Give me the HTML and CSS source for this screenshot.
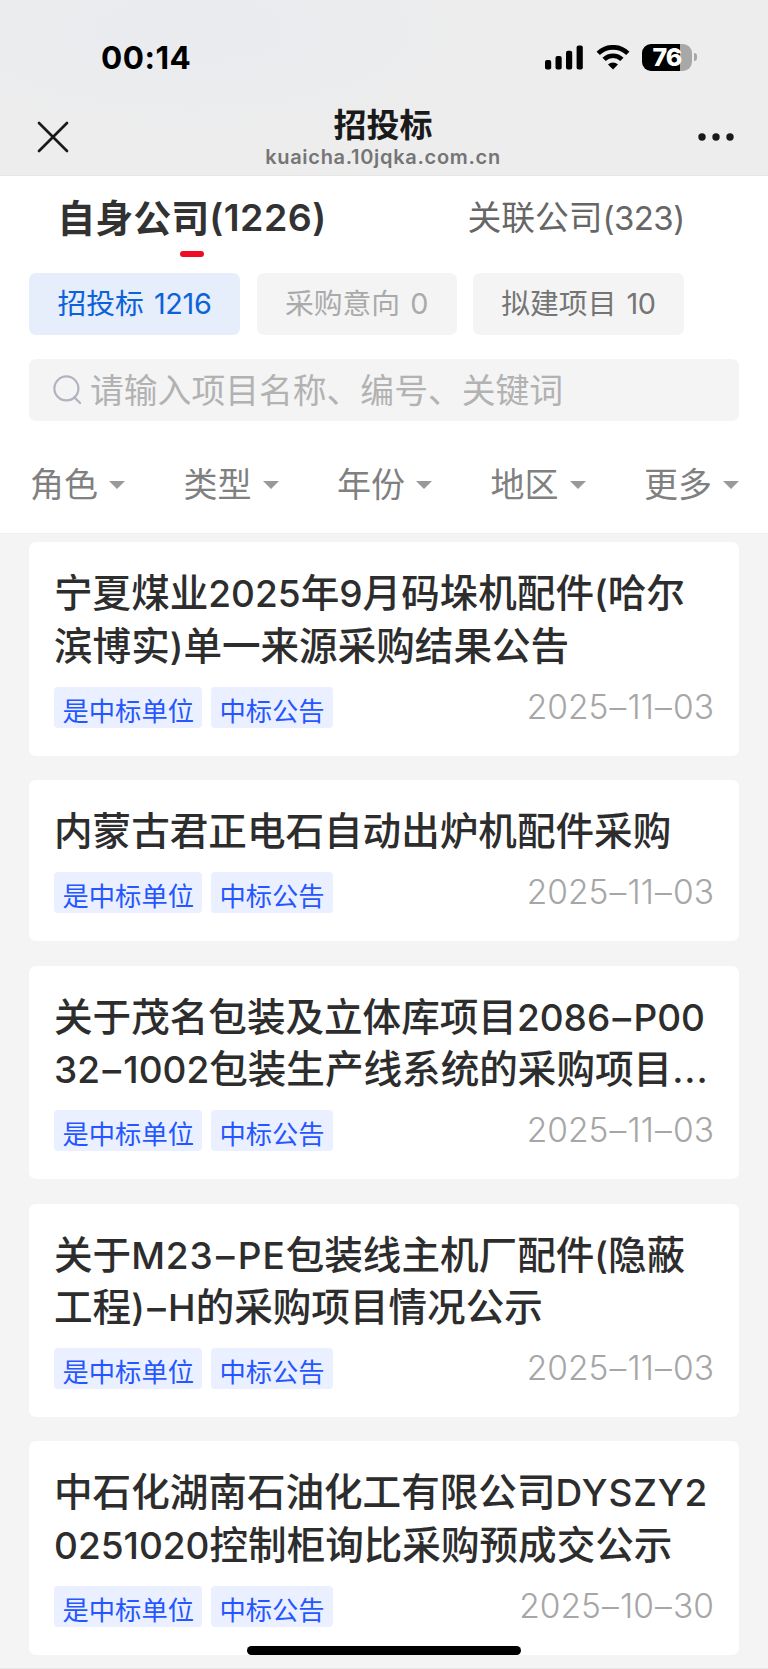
FILE: index.html
```html
<!DOCTYPE html>
<html lang="zh-CN">
<head>
  <meta charset="UTF-8" />
  <meta name="viewport" content="width=device-width, initial-scale=1.0" />
  <title>招投标</title>
  <link rel="stylesheet" href="styles.css">
</head>
<body>
  <header class="top">
    <div class="status-bar">
      <span class="time">00:14</span>
      <div class="status-icons">
        <svg class="signal" width="38" height="25" viewBox="0 0 38 25">
          <rect x="0" y="15" width="6.2" height="9.4" rx="2" />
          <rect x="10.5" y="11" width="6.2" height="13.4" rx="2" />
          <rect x="21" y="5.8" width="6.2" height="18.6" rx="2" />
          <rect x="31.6" y="0.4" width="6.2" height="24" rx="2" />
        </svg>
        <svg class="wifi" width="34" height="25" viewBox="0 0 34 25">
          <path d="M2.2 8.4a21 21 0 0 1 29.6 0M8.1 14.4a12.7 12.7 0 0 1 17.8 0" fill="none" stroke="#000" stroke-width="4.7" />
          <path d="M17 24.6l-5-5a7.2 7.2 0 0 1 10 0z" />
        </svg>
        <div class="battery">
          <div class="battery-body"><span>76</span></div>
          <div class="battery-cap"></div>
        </div>
      </div>
    </div>
    <div class="nav-bar">
      <svg class="close" width="32" height="32" viewBox="0 0 32 32">
        <path d="M2 2l28 28M30 2L2 30" fill="none" stroke="#1a1a1a" stroke-width="2.7" stroke-linecap="round" />
      </svg>
      <div class="nav-title">
        <h1>招投标</h1>
        <p>kuaicha.10jqka.com.cn</p>
      </div>
      <svg class="more" width="36" height="8" viewBox="0 0 36 8">
        <circle cx="4" cy="4" r="3.7" />
        <circle cx="18" cy="4" r="3.7" />
        <circle cx="32" cy="4" r="3.7" />
      </svg>
    </div>
  </header>

  <section class="panel">
    <div class="tabs">
      <div class="tab active">自身公司<span class="num">(1226)</span></div>
      <div class="tab">关联公司<span class="num">(323)</span></div>
    </div>

    <div class="chips">
      <div class="chip chip-wide active">招投标<span class="num">1216</span></div>
      <div class="chip disabled">采购意向<span class="num">0</span></div>
      <div class="chip chip-wide">拟建项目<span class="num">10</span></div>
    </div>

    <div class="search">
      <svg width="30" height="30" viewBox="0 0 30 30">
        <circle cx="13.4" cy="13.4" r="12" />
        <path d="M21.3 22.4l5.8 5.6" />
      </svg>
      <span>请输入项目名称、编号、关键词</span>
    </div>

    <div class="filters">
      <div class="filter">角色<i class="caret"></i></div>
      <div class="filter">类型<i class="caret"></i></div>
      <div class="filter">年份<i class="caret"></i></div>
      <div class="filter">地区<i class="caret"></i></div>
      <div class="filter">更多<i class="caret"></i></div>
    </div>
  </section>

  <main class="list">
    <article class="card">
      <h2>宁夏煤业<span class="num">2025</span>年<span class="num">9</span>月码垛机配件<span class="num">(</span>哈尔<br>滨博实<span class="num">)</span>单一来源采购结果公告</h2>
      <div class="meta">
        <span class="tag">是中标单位</span>
        <span class="tag">中标公告</span>
        <time>2025<span class="dash">–</span>11<span class="dash">–</span>03</time>
      </div>
    </article>

    <article class="card">
      <h2>内蒙古君正电石自动出炉机配件采购</h2>
      <div class="meta">
        <span class="tag">是中标单位</span>
        <span class="tag">中标公告</span>
        <time>2025<span class="dash">–</span>11<span class="dash">–</span>03</time>
      </div>
    </article>

    <article class="card">
      <h2>关于茂名包装及立体库项目<span class="num">2086<span class="dash">–</span>P00</span><br><span class="num">32<span class="dash">–</span>1002</span>包装生产线系统的采购项目<span class="num wide">...</span></h2>
      <div class="meta">
        <span class="tag">是中标单位</span>
        <span class="tag">中标公告</span>
        <time>2025<span class="dash">–</span>11<span class="dash">–</span>03</time>
      </div>
    </article>

    <article class="card">
      <h2>关于<span class="num wide">M23<span class="dash">–</span>PE</span>包装线主机厂配件<span class="num">(</span>隐蔽<br>工程<span class="num">)<span class="dash">–</span>H</span>的采购项目情况公示</h2>
      <div class="meta">
        <span class="tag">是中标单位</span>
        <span class="tag">中标公告</span>
        <time>2025<span class="dash">–</span>11<span class="dash">–</span>03</time>
      </div>
    </article>

    <article class="card">
      <h2>中石化湖南石油化工有限公司<span class="num wide">DYSZY2</span><br><span class="num">0251020</span>控制柜询比采购预成交公示</h2>
      <div class="meta">
        <span class="tag">是中标单位</span>
        <span class="tag">中标公告</span>
        <time>2025<span class="dash">–</span>10<span class="dash">–</span>30</time>
      </div>
    </article>
  </main>

  <div class="home-indicator"></div>
</body>
</html>
```
FILE: styles.css
```css
* {
  margin: 0;
  padding: 0;
  box-sizing: border-box;
}

body {
  font-family: Inter, 'Noto Sans CJK SC', sans-serif;
  color: #2d2d2d;
  background: #f4f4f4;
  height: 1669px;
  overflow: hidden;
  white-space: nowrap;
  border-bottom: 1px solid #e8e8e8;
}

/* status bar + webview nav */
.top {
  height: 176px;
  background: radial-gradient(ellipse 330px 120px at 190px 30px, #eaebef 0%, #ebecee 50%, #ededed 100%);
  border-bottom: 1px solid #e6e6e6;
}

.status-bar {
  height: 99px;
  padding: 15px 71px 0 101px;
  display: flex;
  align-items: center;
  justify-content: space-between;
}

.time {
  font-size: 31.5px;
  font-weight: 700;
  letter-spacing: 0.5px;
  color: #000;
}

.status-icons {
  display: flex;
  align-items: center;
}

.wifi {
  margin: 0 12px 0 13px;
}

.battery {
  display: flex;
  align-items: center;
  gap: 2px;
}

.battery-body {
  width: 50px;
  height: 27px;
  border-radius: 9px;
  background: linear-gradient(90deg, #000 38px, #a8a8a8 38px);
  color: #fff;
  font-size: 25px;
  font-weight: 800;
  line-height: 27px;
  letter-spacing: -1px;
  text-align: center;
}

.battery-cap {
  width: 3px;
  height: 8px;
  border-radius: 0 4px 4px 0;
  background: #a8a8a8;
}

.nav-bar {
  height: 75px;
  padding: 0 34px 0 37px;
  display: grid;
  grid-template-columns: 60px 1fr 60px;
  align-items: center;
}

.nav-title {
  text-align: center;
  padding-right: 5px;
}

.nav-title h1 {
  font-size: 33px;
  line-height: 40px;
  font-weight: 700;
  color: #1a1a1a;
}

.nav-title p {
  font-size: 20px;
  line-height: 24px;
  font-weight: 600;
  letter-spacing: 0.7px;
  color: #757575;
}

.more {
  justify-self: end;
  fill: #1a1a1a;
}

/* tabs, chips, search, filters */
.panel {
  height: 358px;
  background: #fff;
  border-bottom: 1px solid #eee;
  padding: 0 29px;
}

.tabs {
  display: flex;
  height: 97px;
  margin: 0 -29px;
}

.tab {
  flex: 1;
  display: flex;
  justify-content: center;
  font-size: 33.8px;
  line-height: 84px;
  color: #666;
  position: relative;
}

.tab .num {
  font-size: 33px;
  letter-spacing: -0.6px;
}

.tab.active {
  font-size: 38px;
  font-weight: 600;
  color: #323233;
}

.tab.active .num {
  font-size: 37.5px;
  letter-spacing: 0.5px;
}

.tab.active::after {
  content: '';
  position: absolute;
  left: 50%;
  top: 75px;
  width: 24px;
  height: 6px;
  margin-left: -12px;
  border-radius: 3px;
  background: #f10c26;
}

.chips {
  display: flex;
  gap: 16.5px;
}

.chip {
  width: 200px;
  height: 62px;
  border-radius: 7px;
  background: #f4f4f4;
  color: #757575;
  font-size: 28.8px;
  line-height: 62px;
  display: flex;
  justify-content: center;
  gap: 10px;
}

.chip .num {
  letter-spacing: -0.3px;
}

.chip-wide {
  width: 211px;
}

.chip.active {
  background: #e6edfb;
  color: #0b62d9;
}

.chip.disabled {
  color: #aaa;
}

.search {
  height: 62px;
  margin-top: 24px;
  padding-left: 24px;
  border-radius: 7px;
  background: #f4f4f4;
  color: #b2b2b2;
  display: flex;
  align-items: center;
  gap: 7px;
  font-size: 33.8px;
}

.search span {
  padding-bottom: 4px;
}

.search svg {
  fill: none;
  stroke: #b1b4c0;
  stroke-width: 2.2;
  stroke-linecap: round;
}

.filters {
  display: flex;
  justify-content: space-between;
  margin-top: 34px;
  padding-left: 1px;
}

.filter {
  display: flex;
  align-items: center;
  gap: 11px;
  font-size: 34px;
  line-height: 60px;
  color: #808080;
}

.caret {
  border: 8px solid transparent;
  border-top-color: #999;
  border-bottom: 0;
}

/* list */
.list {
  padding: 8.4px 29px 0;
  display: flex;
  flex-direction: column;
  gap: 24.6px;
}

.card {
  background: #fff;
  border-radius: 7px;
  padding: 25px 25px 28px;
}

.card h2 {
  font-size: 38.6px;
  line-height: 52.5px;
  font-weight: 500;
  margin-bottom: 14.6px;
}

.card h2 .num {
  font-size: 37px;
  line-height: 1;
}

.card h2 .wide {
  letter-spacing: 0.9px;
}

.dash {
  margin: 0 2.4px;
}

.meta {
  display: flex;
  align-items: center;
  gap: 8.5px;
}

.tag {
  height: 40.7px;
  padding: 4px 8.5px 0;
  border-radius: 4px;
  background: #eaf0ff;
  color: #2556ff;
  font-size: 26.3px;
  line-height: 41.5px;
}

.meta time {
  margin-left: auto;
  font-size: 33.5px;
  line-height: 40.7px;
  font-weight: 300;
  color: #a6a6a6;
}

.meta .dash {
  margin: 0 1.2px;
}

.home-indicator {
  position: fixed;
  left: 247px;
  top: 1645.5px;
  width: 274px;
  height: 9px;
  border-radius: 5px;
  background: #000;
}
```
